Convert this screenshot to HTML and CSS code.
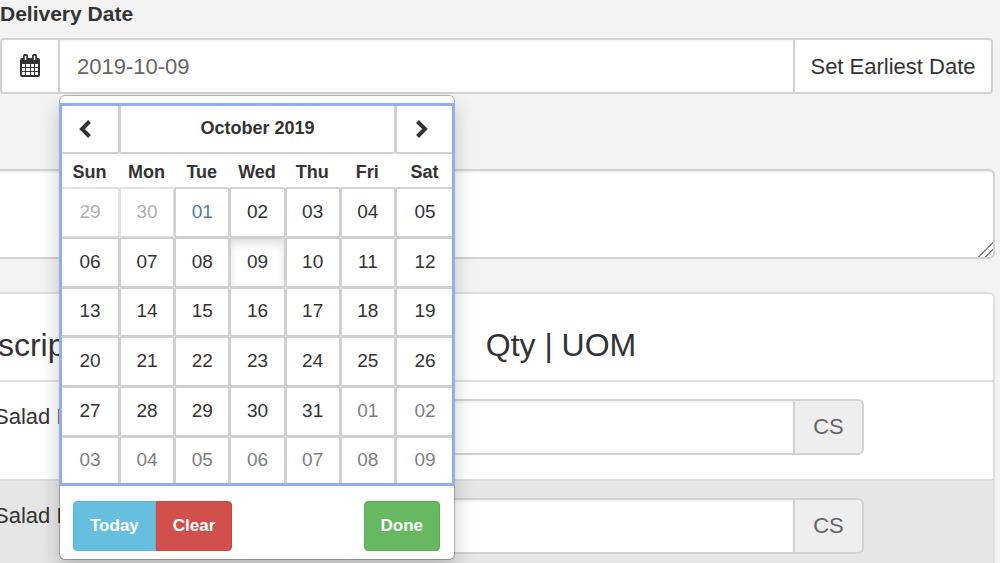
FILE: index.html
```
<!DOCTYPE html>
<html lang="en">

<head>
    <meta charset="utf-8">
    <title>Delivery Date</title>
    <link rel="stylesheet" href="styles.css">
</head>

<body>
    <form class="order-form">
        <label class="form-label" for="deliveryDate">Delivery Date</label>
        <div class="input-group date-group">
            <span class="addon addon-icon">
                <svg width="22" height="24" viewBox="0 0 22 24" aria-hidden="true">
                    <rect x="1" y="4" width="20" height="19" rx="2" fill="#333"/>
                    <path d="M3 10h3v3H3zM7 10h4v3H7zM12 10h3v3h-3zM16 10h3v3h-3zM3 14h3v3H3zM7 14h4v3H7zM12 14h3v3h-3zM16 14h3v3h-3zM3 18h3v3H3zM7 18h4v3H7zM12 18h3v3h-3zM16 18h3v3h-3z" fill="#fff"/>
                    <rect x="4" y="0" width="5" height="8" rx="2" fill="#333"/>
                    <rect x="13" y="0" width="5" height="8" rx="2" fill="#333"/>
                    <path d="M6.500 2v4M15.500 2v4" stroke="#fff" stroke-width="1.500"/>
                </svg>
            </span>
            <input class="form-control" type="text" id="deliveryDate" value="2019-10-09">
            <button class="btn btn-default" type="button">Set Earliest Date</button>

            <div class="datepicker">
                <table class="calendar">
                    <colgroup>
                        <col class="col-edge">
                        <col span="5">
                        <col class="col-edge">
                    </colgroup>
                    <thead>
                        <tr class="calendar-nav">
                            <th><button type="button" aria-label="Previous month"><svg width="24" height="20" viewBox="0 0 24 20"><path d="M11.500 2.500L4 10l7.500 7.500" fill="none" stroke="#333" stroke-width="4"/></svg></button></th>
                            <th colspan="5"><button type="button">October 2019</button></th>
                            <th><button type="button" aria-label="Next month"><svg width="20" height="20" viewBox="0 0 20 20"><path d="M2.500 2.500L10 10l-7.500 7.500" fill="none" stroke="#333" stroke-width="4"/></svg></button></th>
                        </tr>
                        <tr class="calendar-week">
                            <th>Sun</th><th>Mon</th><th>Tue</th><th>Wed</th><th>Thu</th><th>Fri</th><th>Sat</th>
                        </tr>
                    </thead>
                    <tbody>
                        <tr>
                            <td><button type="button" disabled>29</button></td>
                            <td><button type="button" disabled>30</button></td>
                            <td><button type="button" class="today">01</button></td>
                            <td><button type="button">02</button></td>
                            <td><button type="button">03</button></td>
                            <td><button type="button">04</button></td>
                            <td><button type="button">05</button></td>
                        </tr>
                        <tr>
                            <td><button type="button">06</button></td>
                            <td><button type="button">07</button></td>
                            <td><button type="button">08</button></td>
                            <td><button type="button" class="active">09</button></td>
                            <td><button type="button">10</button></td>
                            <td><button type="button">11</button></td>
                            <td><button type="button">12</button></td>
                        </tr>
                        <tr>
                            <td><button type="button">13</button></td>
                            <td><button type="button">14</button></td>
                            <td><button type="button">15</button></td>
                            <td><button type="button">16</button></td>
                            <td><button type="button">17</button></td>
                            <td><button type="button">18</button></td>
                            <td><button type="button">19</button></td>
                        </tr>
                        <tr>
                            <td><button type="button">20</button></td>
                            <td><button type="button">21</button></td>
                            <td><button type="button">22</button></td>
                            <td><button type="button">23</button></td>
                            <td><button type="button">24</button></td>
                            <td><button type="button">25</button></td>
                            <td><button type="button">26</button></td>
                        </tr>
                        <tr>
                            <td><button type="button">27</button></td>
                            <td><button type="button">28</button></td>
                            <td><button type="button">29</button></td>
                            <td><button type="button">30</button></td>
                            <td><button type="button">31</button></td>
                            <td><button type="button" class="other-month">01</button></td>
                            <td><button type="button" class="other-month">02</button></td>
                        </tr>
                        <tr>
                            <td><button type="button" class="other-month">03</button></td>
                            <td><button type="button" class="other-month">04</button></td>
                            <td><button type="button" class="other-month">05</button></td>
                            <td><button type="button" class="other-month">06</button></td>
                            <td><button type="button" class="other-month">07</button></td>
                            <td><button type="button" class="other-month">08</button></td>
                            <td><button type="button" class="other-month">09</button></td>
                        </tr>
                    </tbody>
                </table>
                <div class="datepicker-footer">
                    <div class="btn-group">
                        <button class="btn-sm btn-info" type="button">Today</button>
                        <button class="btn-sm btn-danger" type="button">Clear</button>
                    </div>
                    <button class="btn-sm btn-success" type="button">Done</button>
                </div>
            </div>
        </div>

        <textarea class="form-control notes" aria-label="Notes"></textarea>

        <div class="panel">
            <table class="products">
                <thead>
                    <tr>
                        <th class="col-name">Description</th>
                        <th class="col-qty">Qty | UOM</th>
                        <th class="col-end"></th>
                    </tr>
                </thead>
                <tbody>
                    <tr>
                        <td class="name">Salad Mix</td>
                        <td>
                            <div class="input-group">
                                <input class="form-control" type="text" aria-label="Quantity">
                                <span class="addon addon-unit">CS</span>
                            </div>
                        </td>
                        <td></td>
                    </tr>
                    <tr>
                        <td class="name">Salad Mix</td>
                        <td>
                            <div class="input-group">
                                <input class="form-control" type="text" aria-label="Quantity">
                                <span class="addon addon-unit">CS</span>
                            </div>
                        </td>
                        <td></td>
                    </tr>
                </tbody>
            </table>
        </div>
    </form>
</body>

</html>
```
FILE: styles.css
```
* {
    box-sizing: border-box;
}

body {
    margin: 0;
    height: 100vh;
    overflow: hidden;
    background-color: #f3f3f3;
    color: #333;
    font-family: "Liberation Sans", Arial, sans-serif;
    font-size: 22px;
    line-height: 32px;
}

button, input, textarea {
    font-family: inherit;
    font-size: inherit;
}

.order-form {
    padding-right: 5px;
}

.form-label {
    display: block;
    height: 38px;
    line-height: 28px;
    font-size: 21px;
    font-weight: bold;
}

.input-group {
    display: flex;
    height: 56px;
}

.date-group {
    position: relative;
    margin-right: 2px;
}

.form-control {
    flex: 1;
    min-width: 0;
    padding: 2px 17px 0;
    border: 2px solid #d2d2d2;
    border-radius: 0;
    background-color: #fff;
    box-shadow: inset 0 2px 2px rgba(0, 0, 0, 0.05);
    color: #666;
}

.addon {
    display: flex;
    align-items: center;
    justify-content: center;
    border: 2px solid #d2d2d2;
}

.addon-icon {
    width: 60px;
    margin-right: -2px;
    border-radius: 4px 0 0 4px;
    background-color: #fff;
}

.addon-unit {
    width: 71px;
    margin-left: -2px;
    border-radius: 0 6px 6px 0;
    background-color: #eee;
    color: #666;
}

.btn-default {
    width: 200px;
    margin-left: -2px;
    padding: 2px 0 0;
    border: 2px solid #d2d2d2;
    border-radius: 0 4px 4px 0;
    background-color: #fff;
    color: #333;
}

.datepicker {
    position: absolute;
    top: 57px;
    left: 59px;
    z-index: 10;
    width: 396px;
    padding-top: 8px;
    border: 1px solid rgba(0, 0, 0, 0.25);
    border-radius: 6px;
    background-color: #fff;
    background-clip: padding-box;
    box-shadow: 0 10px 20px rgba(0, 0, 0, 0.2);
}

.calendar {
    width: 100%;
    table-layout: fixed;
    border-collapse: collapse;
    outline: 3px solid #8fb0ec;
    outline-offset: -2px;
}

.col-edge {
    width: 59px;
}

.calendar th,
.calendar td {
    padding: 0;
    text-align: center;
}

.calendar button {
    display: block;
    width: calc(100% + 1px);
    height: 51px;
    margin: 0 -1px -1px 0;
    padding: 0 0 2px;
    border: 2px solid #d0d0d0;
    border-radius: 3px;
    background-color: #fff;
    color: #333;
    font-size: 19px;
}

.calendar tbody tr:nth-child(3n) button {
    height: 50px;
}

.calendar .calendar-nav button {
    height: 50px;
    margin-bottom: 0;
    font-size: 18px;
    font-weight: bold;
}

.calendar-nav svg {
    vertical-align: middle;
}

.calendar-week th {
    height: 33px;
    padding-top: 3px;
    line-height: 30px;
    font-size: 18px;
}

.calendar button.today {
    color: #4f7ea3;
}

.calendar button.other-month {
    color: #808080;
}

.calendar button:disabled {
    border-color: #e2e2e2;
    color: #b0b0b0;
}

.calendar button.active {
    box-shadow: inset 0 5px 8px rgba(0, 0, 0, 0.125);
}

.datepicker-footer {
    display: flex;
    justify-content: space-between;
    padding: 16px 14px 8px 13px;
}

.btn-group {
    display: flex;
}

.btn-sm {
    height: 50px;
    padding: 0 16px;
    border: 1px solid;
    border-radius: 4px;
    color: #fff;
    font-size: 17px;
    font-weight: bold;
}

.btn-info {
    border-color: #5bb8d8;
    border-radius: 4px 0 0 4px;
    background-color: #66bfdf;
}

.btn-danger {
    border-color: #cb4541;
    border-radius: 0 4px 4px 0;
    background-color: #d2504c;
}

.btn-success {
    border-color: #58ad58;
    background-color: #66b861;
}

.notes {
    display: block;
    width: calc(100% + 56px);
    height: 90px;
    margin: 75px 0 33px -56px;
    border-radius: 6px;
}

.notes::-webkit-resizer {
    background: linear-gradient(135deg, transparent 48%, #888 48%, #888 54%, transparent 54%, transparent 72%, #888 72%, #888 78%, transparent 78%);
}

.panel {
    margin-left: -56px;
    border: 2px solid #e0e0e0;
    border-radius: 6px;
    background-color: #fff;
}

.products {
    width: 100%;
    table-layout: fixed;
    border-collapse: separate;
    border-spacing: 0;
}

.products th {
    height: 86px;
    padding: 20px 11px 4px;
    font-size: 32px;
    font-weight: normal;
}

.products .col-name {
    width: 304px;
    text-align: left;
}

.col-end {
    width: 121px;
}

.products td {
    padding: 17px 8px 24px;
    border-top: 2px solid #e0e0e0;
    vertical-align: top;
}

.products .name {
    padding-top: 19px;
    padding-left: 48px;
}

.products tbody tr:nth-child(even) {
    background-color: #e6e6e6;
}

.products tbody tr:nth-child(even) td {
    border-top-color: #dcdcdc;
}
```
